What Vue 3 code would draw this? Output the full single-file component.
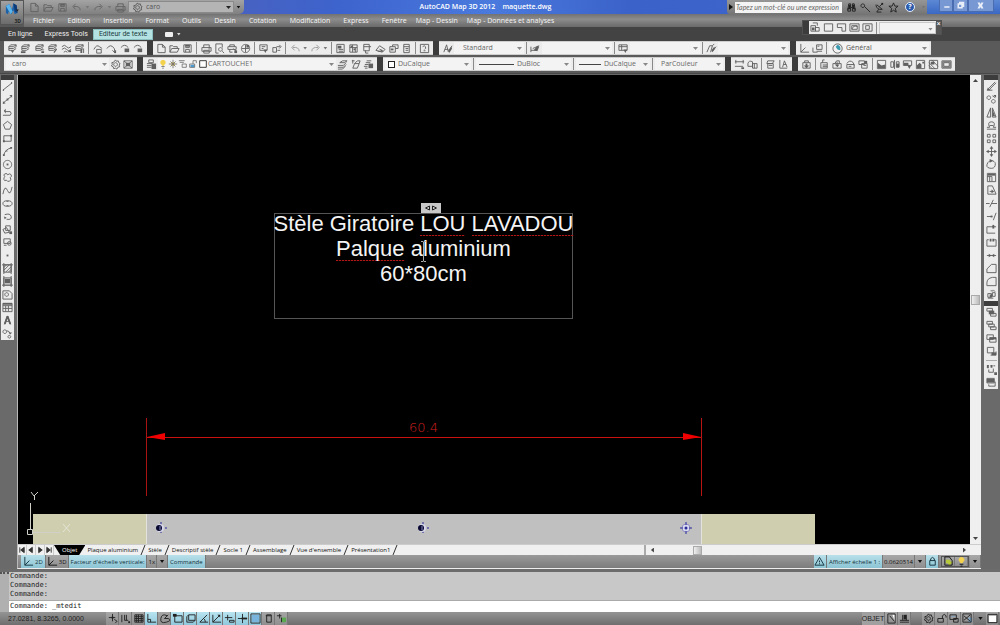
<script setup>
import { h, ref } from 'vue'

const STACK = 'M4 2h6l-3 2h-5zM2 4v2h5l3-2v-2M2 6v2h5l3-2'
const SHEET = 'M2 1.5h5l3 3v6h-8zM7 1.5v3h3'

/* name: [outline, solid part, tint of the solid part] */
const shapes = {
  layDown: [STACK, 'M4 8h4l-2 3z'],
  layLeft: [STACK, 'M1 9h5v2h-5z'],
  layStar: [STACK, 'M7 7h4v1h-4zM8 9h3v2h-3z'],
  layPen: [STACK, 'M7 10l3-4 1 1-3 4z'],
  layWave: ['M1 4q3-3 5 0t5 0M1 7q3-3 5 0t5 0M3 10q2-2 4 0', 'M8 8h3v2h-3z'],
  layLock: [STACK, 'M7 6h2v5h-2zM10 6h1v5h-1z'],
  arcOpen: ['M1 7q3-6 6-3l3 2M4 7h5v4h-5z'],
  arcDown: ['M1 6q4-6 8 0l1 4M7 8l3 3', 'M9 8h2v3h-2z'],
  arcLock: ['M1 5q4-5 8 0', 'M5 6h5v4h-5z'],
  page: [SHEET],
  open: ['M1 10v-7h3l1 1h4v2M1 10l2-4h8l-2 4z'],
  save: ['M2 2h8v8h-8zM4 2v3h4v-3M4 10v-3h4v3', 'M4 2h4v2h-4z'],
  print: ['M3 5v-3h6v3M1 5h10v4h-10zM3 8h6v3h-6z', 'M8 6h2v1h-2z'],
  preview: ['M2 1h7v4M2 1v10h3M7 5a2 2 0 1 0 .1 0M9 9l2 2'],
  plot: ['M3 4v-2h5v2M1 4h9v3h-9zM7 6l3 3M3 7v3h3', 'M8 8h3v3h-3z'],
  globe: ['M6 1.500a4.500 4.500 0 1 0 .1 0M6 2v8M2 6h8', 'M7 2h3v3h-3z'],
  sheetDown: ['M2 2h8v6h-8zM4 4h4M4 6h2', 'M6 7h4l-2 4z'],
  link: ['M2 5h4v5h-4zM6 4h4M9 2l2 2-2 2M7 8h3'],
  undo: ['M10 9q0-5-7-4M5 2l-3 3 3 3'],
  redo: ['M2 9q0-5 7-4M7 2l3 3-3 3'],
  props: ['M2 1.500h8v9h-8zM4 7h5M4 9h5', 'M3 3h4v3h-4z'],
  design: ['M2 2h8v8h-8zM2 5h8M5 2v8M8 5v5', 'M3 3h2v2h-2zM6 6h2v2h-2z'],
  palette: ['M3 1.500h6v7h-6zM5 8v3h3M9 4h2M3 4h6'],
  sheetset: ['M1 8l4-5 6 4-3 3zM3 9h6', 'M4 6l5 2-2 1z'],
  markup: ['M2 4h6v6h-6zM5 4v-2h6v4h-3', 'M3 6h3v2h-3z'],
  calc: ['M3 1.500h6v9h-6zM3 4h6M5 6h3M5 8h3'],
  help: ['M1.500 1.500h9v9h-9zM4 4q2-2 3 0t-1 3', 'M5 8h2v1h-2z'],
  aStyle: ['M2 10l3-8 2 8M3 7h4M7 9l4-6', 'M7 8l3-4 1 2-3 5z'],
  dimStyle: ['M1 8h6M1 4v6M3 6l7-3', 'M4 8l4-5 2 1-2 5z'],
  tabStyle: ['M1 2h9v6h-9zM1 4h9M4 2v6', 'M6 7h4l-2 4z'],
  mlStyle: ['M1 10l3-7h3l-2 7M7 9l4-5M7 3l2-2', 'M6 8l3-4 1 2-3 4z'],
  ucs: ['M2 1v9h9M2 10l5-5'],
  ucsBox: ['M1 5v5h5M5 2h6v5h-6zM5 9h6', 'M6 3h2v1h-2z'],
  gear: ['M6 4a2 2 0 1 0 .1 0M6 1l1 1.500 2-.5.5 2 1.500 1-1 1.500.5 2-2 .5-1 2-1.500-1-2 .5-.5-2-2-1 1-1.500-.5-2 2-.5z'],
  group: ['M1 2h9v8h-9zM1 2l9 8M10 2l-9 8', 'M3 4h5v4h-5z'],
  layers: ['M3 1h5v3h-5zM1 5h6M1 7h5M1 9h5', 'M6 5h5v6h-5z'],
  layPrev: ['M3 4h5l3-2h-5zM1 7h6l3-3M1 9h6l3-3M1 11h5l3-3'],
  layBack: ['M2 2h3M3 1v4M5 5h5l-2 5h-5zM5 5l3-3h3l-1 3'],
  layState: ['M4 2h5M3 4h5M2 6h4M1 8h4M2 10h3', 'M6 5h5v5h-5z'],
  dist: ['M1 3h10M1 8h9M2 1v4M10 1v4', 'M8 9h3v2h-3z'],
  area: ['M1 5q1-4 5-2v5h-5zM6 5h5v5h-5zM8 5v5'],
  list: ['M3 2h7l-2 3h-6zM3 5h6v5h-6zM4 7h4'],
  idPt: ['M2 1v9h8M5 9l2-7 3 7M6 6h3'],
  imp: ['M2 4h8v6h-8zM4 4v-2h4v2', 'M5 5h2v2h2l-3 3-3-3h2z'],
  box1: ['M2 4h7v6h-7zM4 4v-3h2', 'M4 6h5v1h-5zM4 8h5v1h-5z'],
  box2: ['M1 5h9v5h-9zM3 5l2-3h3v3', 'M5 3h1v3h2l-2 3-3-3h2z'],
  box3: ['M2 6h8v4h-8zM2 5q3-5 7-1l1 3M4 8h3'],
  box4: ['M1 2h6v4h-6zM4 5h6v5h-6zM6 7h3', 'M7 2h3v3h-3z'],
  imgA: ['M1.500 1.500h9v9h-9z', 'M2 4l4 3 4-1v4h-8z'],
  imgB: ['M2 3h3v6h-3zM6 1v10M8 3h3v6h-3z', 'M8 5h3v4h-3z'],
  imgC: ['M1.500 2h9v5h-9z', 'M2 4h5v3h-5zM6 7h4l-2 4z'],
  imgD: ['M1.500 1.500h9v9h-9z', 'M2 7l3-3 2 2v4h-5zM8 3h2v2h-2z'],
  imgE: ['M1.500 1.500h9v9h-9zM1 4l7 7M4 1l7 7M1 7l4 4', 'M3 3h4v3h-4z'],
  imgF: ['M1 2h10v8h-10zM3 4h6v4h-6zM2 3h8v6h-8z'],
  line: ['M1 10l10-8', 'M1 9h1v2h-1zM10 1h1v2h-1z'],
  xline: ['M1 10l10-8', 'M1 8l3 2-3 1zM8 1h3v3zM5 5h2v2h-2z'],
  pline: ['M1 9h8q2-2 0-4h-6', 'M2 4l2-2v5z'],
  polygon: ['M6 1.500l4.500 3.500-2 5h-5l-2-5z'],
  rect: ['M2 3h8v6h-8z', 'M1 8h2v2h-2zM9 2h2v2h-2z'],
  arc: ['M2 10q1-6 8-8', 'M1 9h2v2h-2zM4 5h2v1h-2zM9 1h2v2h-2z'],
  circle: ['M6 1.500a4.500 4.500 0 1 0 .1 0', 'M5 5h2v2h-2z'],
  cloud: ['M3 2q3-1 3 1 3-2 4 0t-1 3q2 3-1 4-2 1-3-1-3 1-3-1t1-3q-2-2 0-3z'],
  spline: ['M1 10q2-11 5-4t5-4'],
  ellipse: ['M6 3q5 0 5 3t-5 3-5-3 5-3z', 'M5 3h2v1h-2zM5 8h2v1h-2z'],
  ellArc: ['M3 4q6-2 7 2t-5 3', 'M2 6l3 1-2 2z'],
  insert: ['M4 2h5v5h-5zM1 6l4-2 3 5-5 1z', 'M8 8h3v3h-3z'],
  block: ['M2 2h7v5h-7zM6 7a2 2 0 1 0 4 0a2 2 0 1 0-4 0M2 9h3'],
  point: ['', 'M5 5h2v2h-2z'],
  hatch: ['M2 2h8v8h-8zM2 5l3-3M2 8l6-6M4 10l6-6M7 10l3-3M0 2h12M2 0v12M10 0v12'],
  grad: ['M2 2h8v8h-8zM0 10h12M10 0v12M2 0v12', 'M3 3h6v5h-6z'],
  region: ['M1 2h7l3 3v6h-10zM5 4a2 2 0 1 0 .1 0'],
  table: ['M1 1.500h10v9h-10zM1 4h10M1 7h10M4 4v6M7 4v6', 'M1 1h10v2h-10z'],
  letterA: ['M2.500 10l3.500-9 3.500 9M4 7h4', 'M2 10l3-9h2l3 9h-2l-2-6-2 6z'],
  addSel: ['M3 2a2 2 0 1 0 .1 0M8 8a1.500 1.500 0 1 0 .1 0M5 3q3 0 4 3', 'M7 5h4l-2 2z'],
  erase: ['M3 8l7-7M4 9l7-7M1 10h6', 'M2 7l3 3h-4z'],
  copy: ['M3 2a2 2 0 1 0 .1 0M8 6a2 2 0 1 0 .1 0M7 2l3 2', 'M8 1h3v3z'],
  mirror: ['M5 1v10h-4zM7 1l4 10h-4z', 'M7 3l3 7h-3z'],
  offset: ['M1 10h10M1 8h3q-3-6 2-6t2 6h3M4 6h4'],
  array: ['M1.500 1.500h3v3h-3zM7.500 1.500h3v3h-3zM1.500 7.500h3v3h-3zM7.500 7.500h3v3h-3z'],
  move: ['M6 2v8M2 6h8', 'M6 0l2 3h-4zM6 12l2-3h-4zM0 6l3-2v4zM12 6l-3-2v4z'],
  rotate: ['M7 2q4 1 3 5t-6 3-2-6q1-2 4-2', 'M4 0l4 2-4 2z'],
  scale: ['M1.500 1.500h9v9h-9zM1.500 5h5v5M4 5v5', 'M2 2h8v2h-8z'],
  stretch: ['M2 1h5l4 9h-9zM4 7h3', 'M6 5l3 2-3 2z'],
  trim: ['M0 6h4M6 6h6M4 10l4-8'],
  extend: ['M1 6h6M8 10l3-8', 'M5 5h2v2h-2z'],
  brk1: ['M9 3h-8v7h9M7 3h4', 'M7 1h2v4h-2z'],
  brk2: ['M3 3h-2v7h10v-7h-2', 'M4 2h2v3h-2zM7 2h2v3h-2z'],
  join: ['M1 6h10', 'M3 4l3 2-3 2zM9 4l-3 2 3 2z'],
  chamfer: ['M1 10.500h10v-9h-5l-5 5z'],
  fillet: ['M1 10.500h10v-9h-4q-6 1-6 6z'],
  explode: ['M2 5h4v4h-4zM7 4h3v4h-3zM5 2h3M8 1l2 2M2 10h6', 'M4 6h3v3h-3z'],
  front: ['M1 1.500h6v3h-6zM5 7h6v3h-6z', 'M3 4h6v4h-6z'],
  back: ['M1 1.500h6v3h-6zM3 4.500h6v3h-6zM5 7.500h6v3h-6z'],
  above: ['M1 2h7v5h-7zM4 5h7v5h-7z', 'M4 5h7v2h-7z'],
  under: ['M1.500 1.500h7v6h-7zM5 10h6v-4', 'M6 7h5v3h-5z'],
  textFront: ['M1 2h2M5 2h2M8 2h2M1 4h2M3 6v3h5v-4', 'M1 1h2v3h-2zM5 1h2v3h-2zM9 9h3v3h-3z'],
  hatchBack: ['M1 1.500h8v5h-8zM3 8v2h7v-5', 'M1 2h8v4h-8z'],
  magnet: ['M2 2v8M5 2v6h4M7 2v6', 'M9 9h2v2h-2z'],
  infer: ['M6 1v8M2 5h7M8 7l3 2-2 2', 'M5 4h2v2h-2z'],
  gridI: ['M2 2h9v8h-9zM2 4h9M2 6h9M2 8h9M4 2v8M6 2v8M9 2v8'],
  ortho: ['M2 1v9h9M2 7h3v3'],
  polar: ['M9 3q-6-3-7 3t6 4 2-4h-4M6 6l4-4'],
  osnap: ['M3 3h8v7h-8z', 'M1 1h4v3h-4z'],
  osnap3: ['M4 2h7v6h-7zM2 4v6h7l2-2M2 4l2-2'],
  otrack: ['M10 2l-8 8h9M6 6q2 1 2 4'],
  ducs: ['M2 2v8h9M2 10l7-7', 'M7 2h3v3z'],
  dyn: ['M1 5h8M4 2v6M6 8h5v2h-5z'],
  lwt: ['M1 6h10M6 1v10', 'M5 5h6v2h-6z'],
  tpy: ['M1 1h10v10h-10z', 'M2 2h8v8h-8z', '#78b4dc'],
  qp: ['M4 2h5v8h-5zM3 3h6'],
  sc: ['M1 3h5M4 1v5M6 5v5', 'M6 5h5v5h-5z', '#5aa850'],
  model: ['M2 1h8v10h-8zM4 3l5 6', 'M7 2h3v8z', '#fff'],
  layoutI: ['M1 8h10M1 10h10M4 2v6M8 2v6', 'M5 2h3v5h-3z'],
  unlock: ['M2 6h6v4h-6zM7 6v-3q2-3 4 0v2'],
  lock: ['M3 5h6v5h-6zM4 5v-2q2-3 4 0v2'],
  hw: ['M1 2h7v5h-7zM5 6h5v4h-5z', 'M2 3h5v1h-5z', '#7da7c8'],
  isolate: ['M2 3l7 6M2 8l7-6M1 1h9v9h-9z', 'M7 5h4v5h-4z', '#7da7c8'],
  clean: ['M1 1.500h10v9h-10z', 'M2 3h8v7h-8z', '#fff'],
  warn: ['M6 1.500l5 8.500h-10zM6 5v2M6 8v1'],
  bulb: ['M4 9h4M5 11h2', 'M6 1q4 1 3 4l-2 3h-2l-2-3q-1-3 3-4', '#f3d24e'],
  sun: ['M6 1v10M1 6h10M3 3l6 6M9 3l-6 6', 'M4 4h4v4h-4z', '#f5cf4c'],
  freeze: ['M1 2h7M2 4h5M5 6h5v4h-5z'],
  unlockBlue: ['M2 6h6v4h-6zM6 6v-4h4v3', 'M3 7h5v3h-5z', '#4b9bd5'],
  square: ['M2 2h8v8h-8z', 'M3 3h6v6h-6z', '#fff'],
  annot: ['M2 1h5l3 4v5h-8z', 'M3 4h5v2h3l-4 5-2-3h-2z', '#b7c93a'],
  binoc: ['M2 9l1-7h2v4h2v-4h2l1 7M2 7h3v3h-3zM7 7h3v3h-3z', 'M3 3h2v5h-2zM7 3h2v5h-2z'],
  key: ['M3 2a2 2 0 1 0 .1 0M5 5l6 6'],
  dish: ['M2 3q1 6 7 5M3 3l6 5M6 5l3-3M5 8l-2 3h5', 'M8 1h2v2h-2z'],
  star: ['M6 1l1.500 3.500h3.500l-3 2.500 1 4-3-2-3 2 1-4-3-2.500h3.500z'],
  earth: ['M6 1a5 5 0 1 0 .1 0', 'M6 2q4 1 3 6l-3-1-2-3z', '#3c9bb0'],
  boundary: ['M3 1h5v3M1 4h5v6h-5zM6 6h4v4h-4z', 'M2 6h3v3h-3z'],
  vpOne: ['M1.500 2h9v8h-9z'],
  vpPoly: ['M1.500 2h9v8h-4v-4h-5z'],
  vpObj: ['M1 2h10v8h-10zM3 4h6v4h-6zM3 8q2-5 6-3'],
  vpClip: ['M1 2h10v8h-10zM4 4h4v4h-4z'],
}

const Ico = (props) => {
  const [line, solid, tint] = shapes[props.n]
  return h('svg', { class: 'ico', viewBox: '0 0 12 12', 'aria-hidden': 'true' }, [
    solid ? h('path', { d: solid, fill: tint || 'currentColor', stroke: 'none' }) : null,
    h('path', { d: line }),
  ])
}
Ico.props = ['n']

const menus = ['Fichier', 'Edition', 'Insertion', 'Format', 'Outils', 'Dessin', 'Cotation', 'Modification', 'Express', 'Fenêtre', 'Map - Dessin', 'Map - Données et analyses']

const mapTools = ['layDown', 'layLeft', 'layStar', 'layPen', 'layWave', 'layLock', '|', 'arcOpen', 'arcDown', 'arcLock', 'arcLock']
const standardTools = ['page', 'open', 'save', '|', 'print', 'preview', 'plot', 'globe', '|', 'sheetDown', 'link', '|', 'undo', 'v', 'redo', 'v', '|', 'props', 'design', 'palette', 'sheetset', 'markup', 'calc', '|', 'help']
const styleLists = [
  { icon: 'aStyle', label: 'Style de texte', value: 'Standard' },
  { icon: 'dimStyle', label: 'Style de cote', value: '' },
  { icon: 'tabStyle', label: 'Style de tableau', value: '' },
  { icon: 'mlStyle', label: 'Style de ligne de repère', value: '' },
]
const inquiry = ['dist', 'area', '|', 'list', 'idPt']
const reference = ['imp', '|', 'box1', 'box2', 'box3', 'box4', '|', 'imgA', 'imgB', 'imgC', 'imgD', 'imgE', 'imgF']
const drawTools = ['line', 'xline', 'pline', 'polygon', 'rect', 'arc', 'circle', 'cloud', 'spline', 'ellipse', 'ellArc', 'insert', 'block', 'point', 'hatch', 'grad', 'region', 'table', 'letterA', 'addSel']
const modifyTools = ['erase', 'copy', 'mirror', 'offset', 'array', 'move', 'rotate', 'scale', 'stretch', 'trim', 'extend', 'brk1', 'brk2', 'join', 'chamfer', 'fillet', 'explode']
const orderTools = ['front', 'back', 'above', 'under', '|', 'textFront', 'hatchBack']
const viewportTools = ['boundary', 'vpOne', 'vpPoly', 'vpObj', 'vpClip']
const layouts = ['Plaque aluminium', 'Stèle', 'Descriptif stèle', 'Socle 1', 'Assemblage', "Vue d'ensemble", 'Présentation1']
const modes = [
  ['infer', 0], ['magnet', 0], ['gridI', 0], ['ortho', 1], ['polar', 0], ['osnap', 1], ['osnap3', 1],
  ['otrack', 1], ['ducs', 1], ['dyn', 1], ['lwt', 1], ['tpy', 1], ['qp', 0], ['sc', 0],
]
const command = ref('_mtedit')
</script>

<template>
  <div class="app">
    <header class="head">
      <button class="logo" aria-label="Menu de l'application">
        <svg viewBox="0 0 24 25">
          <path d="M3 6l5-3 4 8 2-9 5 3 1 11-4 2-2-6-3 6-4-4-1 4-3-2z" fill="#1c62a8" />
          <path d="M3 6l5-3 5 11-3 4z" fill="#5cb4ec" />
          <path d="M14 2l5 3 1 11-4-2z" fill="#0d3b78" />
          <path d="M18 11h4l-2 3z" fill="#222" />
        </svg>
        <span>3D</span>
      </button>
      <div class="title">
        <div class="quick">
          <button v-for="n in ['page', 'open', 'save']" :key="n" :aria-label="n"><Ico :n="n" /></button>
          <button aria-label="Annuler"><Ico n="undo" /></button><i class="dn"></i>
          <button aria-label="Rétablir"><Ico n="redo" /></button><i class="dn"></i>
          <button aria-label="Tracer"><Ico n="print" /></button>
          <label class="combo space"><Ico n="gear" /><select aria-label="Espace de travail"><option>caro</option></select></label>
          <i class="dn dark"></i>
        </div>
        <h1><span>AutoCAD Map 3D 2012</span><span>maquette.dwg</span></h1>
        <div class="info">
          <button class="fold" aria-label="Réduire"><i></i></button>
          <input type="text" aria-label="Recherche" placeholder="Tapez un mot-clé ou une expression" />
          <button v-for="n in ['binoc', 'key', 'dish', 'star']" :key="n" :aria-label="n"><Ico :n="n" /></button>
          <button class="ask" aria-label="Aide">?</button><i class="dn"></i>
        </div>
        <div class="win">
          <button aria-label="Réduire"><svg viewBox="0 0 12 12"><path d="M3 7h7v2h-7z" /></svg></button>
          <button aria-label="Restaurer"><svg viewBox="0 0 12 12"><path fill-rule="evenodd" d="M4 1h7v7h-2v2h-7v-7h2zM4 5v3h3v-3z" /></svg></button>
          <button class="close" aria-label="Fermer"><svg viewBox="0 0 12 12"><path d="M2 2h3l1 2 1-2h3l-2 4 2 4h-3l-1-2-1 2h-3l2-4z" /></svg></button>
        </div>
      </div>
      <nav class="menu"><a v-for="m in menus" :key="m" href="#">{{ m }}</a></nav>
    </header>

    <div class="ribbon">
      <button>En ligne</button>
      <button>Express Tools</button>
      <button class="on">Editeur de texte</button>
      <button class="mini" aria-label="Réduire le ruban"><b></b><i class="dn"></i></button>
      <div class="float">
        <i class="grip"></i>
        <button v-for="n in viewportTools" :key="n" class="tool" :aria-label="n"><Ico :n="n" /></button>
        <i class="sep"></i>
        <label class="combo scale"><select aria-label="Echelle de fenêtre"><option></option></select></label>
        <button class="x" aria-label="Fermer">×</button>
      </div>
    </div>

    <div class="bars">
      <div class="row">
        <div class="bar map">
          <template v-for="(n, i) in mapTools" :key="i"><i v-if="n === '|'" class="sep"></i><button v-else class="tool" :aria-label="n"><Ico :n="n" /></button></template>
        </div>
        <i class="grip"></i>
        <div class="bar standard">
          <template v-for="(n, i) in standardTools" :key="i">
            <i v-if="n === '|'" class="sep"></i><i v-else-if="n === 'v'" class="dn"></i>
            <button v-else class="tool" :class="{ pale: n === 'undo' || n === 'redo' }" :aria-label="n"><Ico :n="n" /></button>
          </template>
        </div>
        <i class="grip"></i>
        <div class="bar">
          <template v-for="(s, i) in styleLists" :key="s.icon">
            <i v-if="i" class="sep"></i>
            <button class="tool" :aria-label="s.label"><Ico :n="s.icon" /></button>
            <label class="combo style"><select :aria-label="s.label"><option>{{ s.value }}</option></select></label>
          </template>
        </div>
        <i class="grip"></i>
        <div class="bar">
          <button class="tool" aria-label="SCU"><Ico n="ucs" /></button>
          <button class="tool" aria-label="SCU nommé"><Ico n="ucsBox" /></button>
          <i class="sep"></i>
          <label class="combo general"><Ico n="earth" /><select aria-label="SCU courant"><option>Général</option></select></label>
        </div>
      </div>
      <div class="row">
        <div class="bar">
          <label class="combo work"><select aria-label="Espaces de travail"><option>caro</option></select></label>
          <button class="tool" aria-label="Paramètres"><Ico n="gear" /></button>
          <button class="tool" aria-label="Groupe"><Ico n="group" /></button>
        </div>
        <i class="grip"></i>
        <div class="bar">
          <button class="tool" aria-label="Calques"><Ico n="layers" /></button>
          <label class="combo layer">
            <span class="marks"><Ico v-for="n in ['bulb', 'sun', 'freeze', 'unlockBlue', 'square']" :key="n" :n="n" /></span>
            <select aria-label="Calque courant"><option>CARTOUCHE1</option></select>
          </label>
          <button v-for="n in ['layPrev', 'layBack', 'layState']" :key="n" class="tool" :aria-label="n"><Ico :n="n" /></button>
        </div>
        <i class="grip"></i>
        <div class="bar">
          <label class="combo colour"><b class="box"></b><select aria-label="Couleur"><option>DuCalque</option></select></label>
          <i class="sep"></i>
          <label class="combo ltype"><b class="dash"></b><select aria-label="Type de ligne"><option>DuBloc</option></select></label>
          <i class="sep"></i>
          <label class="combo lweight"><b class="dash short"></b><select aria-label="Epaisseur"><option>DuCalque</option></select></label>
          <i class="sep"></i>
          <label class="combo plot"><select aria-label="Style de tracé"><option>ParCouleur</option></select></label>
        </div>
        <i class="grip"></i>
        <div class="bar">
          <template v-for="(n, i) in inquiry" :key="i"><i v-if="n === '|'" class="sep"></i><button v-else class="tool" :aria-label="n"><Ico :n="n" /></button></template>
        </div>
        <i class="grip"></i>
        <div class="bar">
          <template v-for="(n, i) in reference" :key="i"><i v-if="n === '|'" class="sep"></i><button v-else class="tool" :aria-label="n"><Ico :n="n" /></button></template>
        </div>
      </div>
    </div>

    <main class="work-area">
      <aside class="side">
        <i class="hgrip"></i>
        <div class="vbar"><button v-for="n in drawTools" :key="n" class="tool" :aria-label="n"><Ico :n="n" /></button></div>
      </aside>

      <section class="doc">
        <div class="view">
          <div class="canvas">
            <svg class="drawing">
              <rect x="15" y="439" width="113" height="40" fill="#cfcfaf" />
              <rect x="128" y="439" width="555" height="40" fill="#c0c0c0" />
              <rect x="683" y="439" width="114" height="40" fill="#cfcfaf" />
              <path d="M128.500 439v40M683.500 439v40" stroke="#e2e2da" />
              <path d="M128.500 343v78" stroke="#a81414" />
              <path d="M683.500 343v78" stroke="#b81414" />
              <path d="M129 362.500h554" stroke="#c81010" />
              <path d="M129 362l18-4v7zM683 362l-18-4v7z" fill="#f00000" />
              <text x="391" y="357" class="dim">60.4</text>
              <g v-for="x in [143, 405]" :key="x" :transform="`translate(${x} 453)`">
                <path d="M0-6v12M-4 0h10" stroke="#2a2a9a" stroke-dasharray="3 1" />
                <circle cx="-1" r="4" fill="#d8d8ea" /><circle cx="-2" r="3" fill="#080830" /><path d="M-1-2v4" stroke="#8888c0" />
              </g>
              <g transform="translate(668 453)">
                <circle r="4" fill="#d8d8ee" stroke="#9090c0" />
                <path d="M0-6v3M0 3v3M-6 0h3M3 0h3" stroke="#2a2a9a" /><circle r="1.500" fill="#2a2a9a" />
              </g>
              <path d="M12.500 428v27M15 457.500h27M9.500 454.500h5v5h-5zM13 417l3 4 4-4M16.500 421v4" stroke="#d0d0c8" fill="none" />
              <path d="M45 449l7 8M52 449l-7 8" stroke="#e4e4d6" />
            </svg>
            <div class="mtext">
              <button class="ruler" aria-label="Largeur du texte">
                <svg viewBox="0 0 14 6"><path d="M5.500 1v4l-4-2zM8.500 1v4l4-2z" /></svg>
              </button>
              <p>Stèle Giratoire <u>LOU</u> <u>LAVADOU</u></p>
              <p><u>Palque</u> aluminium</p>
              <p>60*80cm</p>
              <svg class="caret" viewBox="0 0 5 21"><path d="M0 .5h2l.5.5.5-.5h2M2.500 1v19M0 20.500h2l.5-.5.5.5h2" /></svg>
            </div>
          </div>
          <div class="vscroll"><i class="up"></i><b></b><i class="down"></i></div>
        </div>
        <div class="tabs">
          <button v-for="(d, i) in ['M2 1v6M7 1v6l-4-3z', 'M6 1v6l-4-3z', 'M3 1v6l4-3z', 'M2 1v6l4-3zM7 1v6']" :key="i" class="nav" aria-label="Présentations">
            <svg viewBox="0 0 9 8"><path :d="d" /></svg>
          </button>
          <button class="tab on">Objet</button>
          <template v-for="t in layouts" :key="t">
            <button class="tab">{{ t }}</button>
            <svg class="slash" viewBox="0 0 6 10"><path d="M1 10l4-10" /></svg>
          </template>
          <div class="hscroll"><i class="lf"></i><b></b><i class="rt"></i></div>
        </div>
        <div class="strip">
          <button class="blue"><Ico n="ucs" />2D</button>
          <button><Ico n="ucs" />3D</button>
          <button class="blue">Facteur d'échelle verticale:</button>
          <button>1x</button>
          <button class="arrow" aria-label="Choisir le facteur"><i class="dn dark"></i></button>
          <button class="blue">Commande</button>
          <span class="push"></span>
          <button class="blue icon" aria-label="Avertissement"><Ico n="warn" /></button>
          <button class="blue">Afficher échelle 1 :</button>
          <button>0.0620514</button>
          <button class="arrow" aria-label="Choisir l'échelle"><i class="dn dark"></i></button>
          <button class="blue icon" aria-label="Verrou"><Ico n="lock" /></button>
          <span class="pair"><button class="icon" aria-label="Annotation"><Ico n="annot" /></button><button class="icon" aria-label="Visibilité"><Ico n="bulb" /></button></span>
          <button class="arrow" aria-label="Options"><i class="dn dark"></i></button>
        </div>
      </section>

      <aside class="side right">
        <i class="hgrip"></i>
        <div class="vbar"><button v-for="n in modifyTools" :key="n" class="tool" :aria-label="n"><Ico :n="n" /></button></div>
        <i class="hgrip"></i>
        <div class="vbar">
          <template v-for="(n, i) in orderTools" :key="i"><i v-if="n === '|'" class="hsep"></i><button v-else class="tool" :aria-label="n"><Ico :n="n" /></button></template>
        </div>
      </aside>
    </main>

    <section class="cmd">
      <div class="handle"></div>
      <div class="lines">
        <div class="log"><p>Commande:</p><p>Commande:</p><p>Commande:</p></div>
        <label class="prompt">Commande: <input v-model="command" type="text" /></label>
      </div>
    </section>

    <footer class="foot">
      <span class="coords">27.0281, 8.3265, 0.0000</span>
      <button v-for="[n, on] in modes" :key="n" class="mode" :class="{ on }" :aria-label="n"><Ico :n="n" /></button>
      <span class="push"></span>
      <button class="space-name">OBJET</button>
      <button class="mode" aria-label="Objet"><Ico n="model" /></button>
      <button class="mode" aria-label="Présentation"><Ico n="layoutI" /></button>
      <span class="gap"></span>
      <button v-for="n in ['gear', 'unlock', 'hw', 'isolate']" :key="n" class="mode" :aria-label="n"><Ico :n="n" /></button>
      <i class="dn dark"></i>
      <button class="mode" aria-label="Plein écran"><Ico n="clean" /></button>
    </footer>
  </div>
</template>

<style>
body { margin: 0; background: #666; }
</style>

<style scoped>
* { box-sizing: border-box; }
.app { display: flex; flex-direction: column; min-height: 100vh; overflow: hidden; background: #686868; color: #444; font: 7px/10px "Open Sans", "Noto Sans", sans-serif; }
button, select, input { margin: 0; padding: 0; border: 0; border-radius: 0; background: none; color: inherit; font: inherit; }
button { display: flex; align-items: center; justify-content: center; white-space: nowrap; }
p, h1 { margin: 0; font-weight: 400; }
.ico { width: 11px; height: 11px; flex: none; fill: none; stroke: currentColor; stroke-width: 1; }
.dn { flex: none; width: 7px; height: 3px; background: #777; clip-path: polygon(20% 0, 80% 0, 50% 100%); }
.dn.dark { background: #111; }

.head { display: grid; grid-template: 14px 13px / 24px 1fr; background: linear-gradient(#6e6e6e, #585858); }
.logo { grid-row: 1 / 3; flex-direction: column; margin-bottom: 2px; background: linear-gradient(#a2a2a2, #6c6c6c); border: 1px solid #555; border-radius: 0 0 3px 0; }
.logo svg { width: 22px; height: 17px; }
.logo span { align-self: flex-end; margin-right: 2px; color: #222; font-size: 5px; line-height: 5px; font-weight: 700; }
.title { display: flex; background: linear-gradient(90deg, #4a62c0 20%, #3d63cc 32%, #4a7ade 48%, #3b62c8 62%, #3f68d0); }
.quick { display: flex; align-items: center; gap: 1px; flex: none; width: 220px; padding: 0 2px 0 4px; background: linear-gradient(#a4a4a4, #808080); border-radius: 0 0 5px 0; color: #626262; }
.quick button { width: 13px; }
.quick .combo { flex: 1; height: 12px; background: #b4b4b4; border: 1px solid #8a8a8a; color: #555; }
h1 { flex: 1; display: flex; justify-content: center; gap: 7px; color: #fff; font-size: 7px; line-height: 13px; font-weight: 600; white-space: pre; }
.info { display: flex; align-items: center; flex: none; width: 200px; background: linear-gradient(#969696, #757575); color: #222; border-radius: 0 0 0 3px; }
.info button { width: 14px; height: 13px; }
.info .fold { width: 8px; }
.fold i { width: 4px; height: 6px; background: #111; clip-path: polygon(0 0, 100% 50%, 0 100%); }
.info input { flex: 1; min-width: 0; height: 11px; padding: 0 1px; margin-right: 2px; background: #f4f4f4; font-family: Lato, sans-serif; font-style: italic; }
.info input::placeholder { color: #666; opacity: 1; }
.info .ask { width: 10px; height: 10px; margin: 0 5px; border: 1px solid #e8eef8; border-radius: 50%; background: #2c5cae; color: #fff; font-weight: 700; line-height: 8px; }
.win { display: flex; flex: none; width: 73px; padding: 0 6px 2px 12px; color: #dfe8f8; background: linear-gradient(#5c88d4, #3a68c4); }
.win button { flex: 1; background: #7898d4; border: 1px solid #4a6cb0; border-top: 0; }
.win .close { flex: 2; }
.win svg { width: 9px; height: 9px; fill: #e8eef8; }
.menu { display: flex; align-items: center; gap: 13px; padding-left: 9px; background: linear-gradient(#727272, #8c8c8c 40%, #6a6a6a); }
.menu a { color: #f6f6f6; text-decoration: none; white-space: nowrap; }
.menu a:nth-last-child(-n + 2) { margin-left: -4px; }

.ribbon { position: relative; display: flex; align-items: center; height: 14px; padding-left: 3px; background: #434343; color: #eee; font-family: Roboto, "Open Sans", sans-serif; }
.ribbon > button { height: 11px; padding: 0 5px; }
.ribbon > button:nth-child(2) { margin-left: 2px; }
.ribbon > .on { background: #b4e2e2; color: #1c3c40; border: 1px solid #8cc0c0; }
.ribbon > .mini { gap: 2px; padding-left: 12px; }
.mini b { width: 8px; height: 5px; background: #eee; border-radius: 1px; }
.mini .dn { background: #ddd; }
.float { position: absolute; right: 58px; top: -7px; display: flex; align-items: center; width: 140px; height: 15px; background: #ececec; border: 1px solid #505050; color: #444; }
.scale { flex: 1; margin-right: 5px; border: 1px solid #c8c8c8; }
.x { position: absolute; right: 0; top: 0; width: 5px; height: 100%; align-items: flex-start; background: #555; color: #fff; line-height: 6px; }

.bars { display: flex; flex-direction: column; gap: 2px; padding: 0 0 2px 4px; background: #5a5a5a; border-bottom: 1px solid #484848; }
.row { display: flex; height: 14px; }
.bar { display: flex; align-items: center; justify-content: space-between; flex: none; padding: 0 2px; background: #ececec; border: 1px solid #cfcfcf; border-width: 1px 0; }
.map { width: 143px; }
.standard { width: 280px; }
.grip { flex: none; width: 6px; height: 100%; background: #3c3c3c; }
.tool { flex: none; width: 13px; height: 13px; color: #484848; }
.tool .ico { opacity: .85; }
.pale { color: #8a8a8a; }
.sep { flex: none; width: 1px; height: 12px; margin: 0 2px; background: #8a8a8a; }
.combo { position: relative; display: flex; align-items: center; height: 12px; padding-left: 3px; background: #f3f3f3; color: #686868; }
.combo::after { content: ""; position: absolute; right: 2px; top: 5px; width: 5px; height: 3px; background: #888; clip-path: polygon(0 0, 100% 0, 50% 100%); }
.combo select { appearance: none; flex: 1; min-width: 0; width: 100%; height: 11px; padding-left: 3px; }
.quick .combo::after { background: #222; top: 4px; }
.style { width: 70px; padding-left: 6px; }
.general { width: 100px; color: #555; }
.work { width: 103px; }
.layer { width: 178px; padding-left: 0; }
.marks { display: flex; flex: none; color: #707070; }
.marks .ico { width: 10px; height: 10px; }
.marks .ico:last-child { color: #222; }
.layer select { padding-left: 0; }
.colour { width: 86px; }
.box { flex: none; width: 7px; height: 7px; border: 1px solid #222; background: #fff; }
.ltype { width: 95px; }
.lweight { width: 74px; }
.dash { flex: none; width: 35px; height: 1px; background: #444; }
.dash.short { width: 22px; }
.plot { width: 68px; }

.work-area { flex: 1; display: flex; align-items: stretch; padding-top: 1px; }
.side { display: flex; flex-direction: column; flex: none; width: 17px; padding-left: 1px; background: #6a6a6a; }
.right { width: 19px; padding-left: 3px; }
.hgrip { flex: none; width: 13px; height: 5px; background: #3c3c3c; }
.right .hgrip, .right .vbar { width: 14px; }
.vbar { display: flex; flex-direction: column; align-items: center; width: 13px; background: #ececec; }
.hsep { width: 11px; height: 1px; margin: 2px 0; background: #aaa; }
.doc { flex: 1; min-width: 0; display: flex; flex-direction: column; border-left: 1px solid #b8b8b8; border-bottom: 1px solid #eee; }
.view { flex: 1; display: flex; min-height: 469px; background: #000; }
.canvas { position: relative; flex: 1; overflow: hidden; }
.drawing { position: absolute; inset: 0; width: 100%; height: 100%; }
.dim { fill: #d02020; font: 200 13px "DejaVu Sans", sans-serif; }
.mtext { position: absolute; left: 256px; top: 138px; width: 299px; height: 106px; border: 1px solid #555; color: #f4f4f4; font: 22px/25px "Liberation Sans", Arial, sans-serif; text-align: center; white-space: nowrap; }
.mtext p { margin: 0 -4px; }
.mtext p:first-of-type { margin-top: -3px; }
.mtext u { text-decoration: none; background: repeating-linear-gradient(90deg, #b01818 0 2px, #300 2px 3px) 0 100% / 100% 1px no-repeat; }
.ruler { position: absolute; left: 146px; top: -11px; width: 20px; height: 10px; background: #c8c8c8; }
.ruler svg { width: 14px; height: 6px; fill: none; stroke: #222; }
.caret { position: absolute; left: 146px; top: 27px; width: 5px; height: 21px; fill: none; stroke: #aaa; }
.vscroll { position: relative; display: flex; flex-direction: column; align-items: center; justify-content: space-between; width: 11px; padding: 4px 0; background: #efefef; }
.vscroll b, .hscroll b { position: absolute; width: 9px; height: 10px; background: linear-gradient(90deg, #eee, #bbb); border: 1px solid #aaa; }
.vscroll b { top: 47%; }
.up, .down { width: 5px; height: 3px; background: #444; clip-path: polygon(50% 0, 100% 100%, 0 100%); }
.down { clip-path: polygon(0 0, 100% 0, 50% 100%); }

.tabs { display: flex; align-items: stretch; height: 11px; background: #f0f0f0; border-top: 1px solid #ccc; color: #111; font: 6px/10px "Open Sans", sans-serif; }
.nav { width: 9px; border-right: 1px solid #ccc; }
.nav svg { width: 9px; height: 8px; fill: #333; }
.nav path { stroke: #333; }
.tab { padding: 0 2px; }
.tab.on { padding: 0 8px; background: #000; color: #fff; clip-path: polygon(0 0, 100% 0, 80% 100%, 20% 100%); }
.slash { width: 6px; height: 10px; fill: none; stroke: #333; }
.hscroll { position: relative; display: flex; align-items: center; justify-content: space-between; width: 35%; margin-left: auto; padding: 0 15px 0 5px; border-left: 2px solid #aaa; }
.hscroll b { left: 14%; height: 9px; }
.lf, .rt { width: 3px; height: 5px; background: #444; clip-path: polygon(100% 0, 100% 100%, 0 50%); }
.rt { clip-path: polygon(0 0, 100% 50%, 0 100%); }

.strip { display: flex; height: 13px; padding-left: 3px; background: linear-gradient(#9a9a9a, #7c7c7c); color: #111; font: 6px/10px "Open Sans", sans-serif; }
.strip button { padding: 0 1px; gap: 1px; border-right: 1px solid #777; background: linear-gradient(#a8a8a8, #8e8e8e); }
.strip .blue { padding: 0 2px; background: linear-gradient(#b8e0ea, #8cc4d4); color: #12303a; }
.strip .icon, .strip .blue.icon { width: 13px; padding: 0; }
.strip .arrow { width: 11px; }
.pair { display: flex; margin: 1px 1px 1px 2px; border: 1px solid #555; }
.push { flex: 1; }

.cmd { display: flex; height: 43px; border-top: 3px solid #6c6c6c; font: 7px/9px "DejaVu Sans Mono", monospace; color: #222; }
.handle { width: 9px; background: #b0b0b0; border-top: 2px dotted #555; }
.lines { flex: 1; display: flex; flex-direction: column; background: #c8c8c8; }
.log { flex: 1; padding-left: 1px; }
.prompt { display: flex; align-items: center; gap: 4px; height: 12px; padding-left: 1px; border-top: 1px solid #aaa; background: #fff; }
.prompt input { flex: 1; }

.foot { display: flex; align-items: stretch; height: 13px; padding-right: 1px; background: linear-gradient(#949494, #6e6e6e); color: #222; font: 7px/13px "Liberation Sans", sans-serif; }
.foot .dn { align-self: center; margin: 0 2px 0 3px; }
.coords { width: 106px; padding-left: 8px; }
.mode { width: 13px; background: linear-gradient(#a6a6a6, #8e8e8e); border-right: 1px solid #777; }
.mode.on { background: linear-gradient(#b8e4f0, #90c8dc); }
.space-name { width: 23px; background: #a0a0a0; border-right: 1px solid #777; }
.gap { width: 11px; }
</style>
